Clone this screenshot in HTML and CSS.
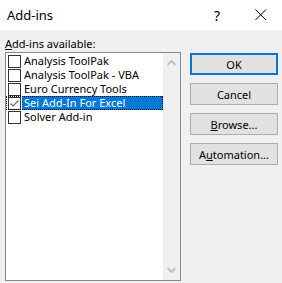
FILE: index.html
```html
<!DOCTYPE html>
<html>
<head>
<meta charset="utf-8">
<link rel="stylesheet" href="styles.css">
</head>
<body>
<div class="dialog">
  <div class="titlebar">
    <span class="title">Add-ins</span>
    <span class="help">?</span>
    <svg class="close" width="12" height="12" viewBox="0 0 12 12"><path d="M0.5 0.5 L11 11 M11 0.5 L0.5 11" stroke="#000" stroke-width="1" fill="none"/></svg>
  </div>
  <div class="content">
    <div class="left">
      <div class="label"><u>A</u>dd-ins available:</div>
      <div class="listbox">
        <div class="items">
          <div class="item"><span class="cb"></span><span class="text">Analysis ToolPak</span></div>
          <div class="item"><span class="cb"></span><span class="text">Analysis ToolPak - VBA</span></div>
          <div class="item"><span class="cb"></span><span class="text">Euro Currency Tools</span></div>
          <div class="item selected"><span class="cb checked"><svg width="11" height="11" viewBox="0 0 11 11"><path d="M1.5 5.5 L4 8 L9.5 2.5" stroke="#6b6b6b" stroke-width="1.2" fill="none"/></svg></span><span class="text">Sei Add-In For Excel</span></div>
          <div class="item"><span class="cb"></span><span class="text">Solver Add-in</span></div>
        </div>
        <div class="scrollbar">
          <svg width="9" height="6" viewBox="0 0 9 6"><path d="M0.5 5 L4.5 1 L8.5 5" stroke="#c1c1c1" stroke-width="2" fill="none"/></svg>
          <svg width="9" height="6" viewBox="0 0 9 6"><path d="M0.5 1 L4.5 5 L8.5 1" stroke="#c1c1c1" stroke-width="2" fill="none"/></svg>
        </div>
      </div>
    </div>
    <div class="buttons">
      <div class="btn default">OK</div>
      <div class="btn">Cancel</div>
      <div class="btn"><u>B</u>rowse...</div>
      <div class="btn">A<u>u</u>tomation...</div>
    </div>
  </div>
</div>
</body>
</html>
```
FILE: styles.css
```css
html, body {
  margin: 0;
  padding: 0;
}
body {
  width: 282px;
  height: 283px;
  background: #f0f0f0;
  font-family: "Noto Sans", "Liberation Sans", sans-serif;
  font-size: 11px;
  color: #000;
  overflow: hidden;
}
.dialog {
  width: 282px;
  height: 283px;
  display: flex;
  flex-direction: column;
}
.titlebar {
  height: 30px;
  background: #fff;
  display: flex;
  align-items: center;
  flex-shrink: 0;
}
.title {
  font-size: 13px;
  margin-left: 7px;
  flex: 1;
}
.help {
  font-size: 14px;
  margin-right: 35px;
}
.close {
  margin-right: 15px;
}
.content {
  display: flex;
  padding: 6px 0 0 5px;
  gap: 9px;
}
.left {
  width: 176px;
  display: flex;
  flex-direction: column;
}
.label {
  line-height: 15px;
  margin-bottom: 1px;
}
.label u, .btn u {
  text-decoration-thickness: 1px;
  text-underline-offset: 1px;
}
.listbox {
  height: 229px;
  box-sizing: border-box;
  border: 1px solid #828790;
  background: #fff;
  display: flex;
}
.items {
  flex: 1;
  padding-top: 1px;
  display: flex;
  flex-direction: column;
}
.item {
  height: 14px;
  display: flex;
  align-items: center;
  padding-left: 2px;
  box-sizing: border-box;
}
.cb {
  width: 13px;
  height: 13px;
  box-sizing: border-box;
  border: 1px solid #333;
  background: #fff;
  flex-shrink: 0;
  display: flex;
  align-items: center;
  justify-content: center;
}
.text {
  flex: 1;
  margin-left: 1px;
  padding-left: 2px;
  line-height: 14px;
  height: 14px;
  white-space: nowrap;
}
.item.selected {
  outline: 1px dotted #000;
  outline-offset: -1px;
}
.item.selected .text {
  background: #0078d7;
  color: #fff;
}
.scrollbar {
  width: 17px;
  background: #f0f0f0;
  display: flex;
  flex-direction: column;
  align-items: center;
  justify-content: space-between;
  padding: 7px 0 7px;
  box-sizing: border-box;
}
.buttons {
  display: flex;
  flex-direction: column;
  gap: 8px;
  padding-top: 17px;
}
.btn {
  width: 88px;
  height: 22px;
  box-sizing: border-box;
  border: 1px solid #adadad;
  background: #e1e1e1;
  display: flex;
  align-items: center;
  justify-content: center;
  white-space: nowrap;
}
.btn.default {
  border: 2px solid #0078d7;
}
```
